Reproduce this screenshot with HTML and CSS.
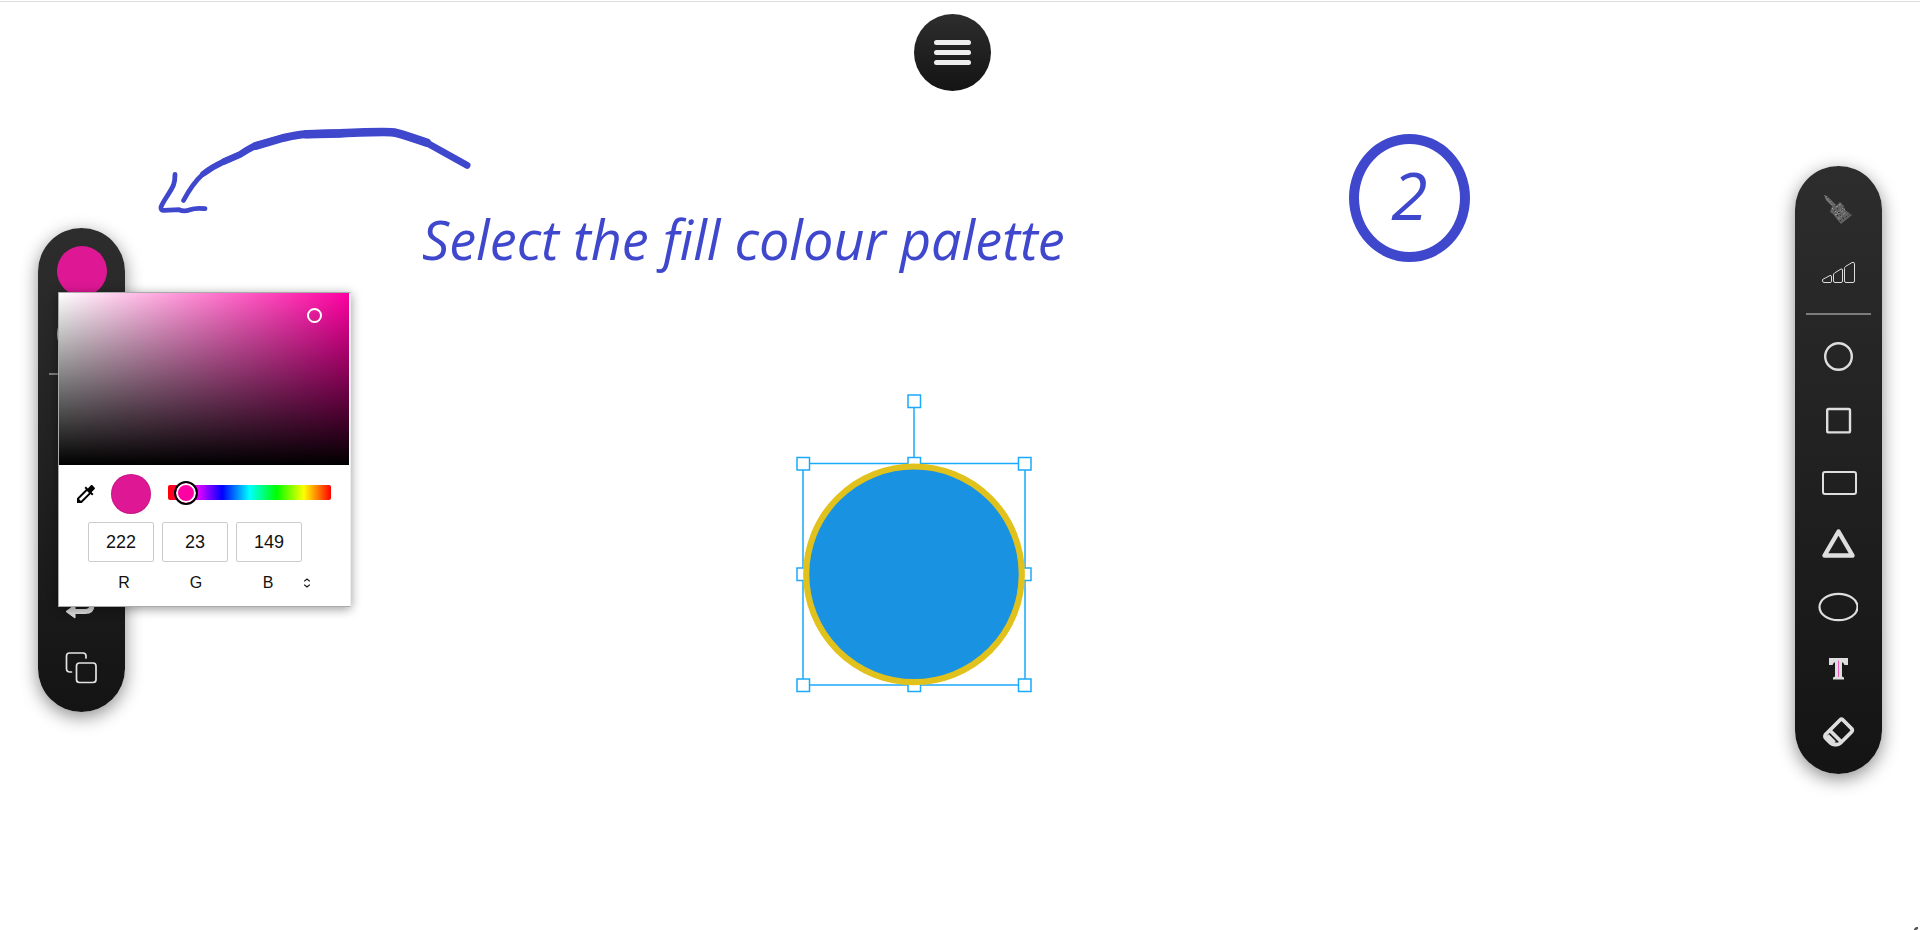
FILE: index.html
```html
<!DOCTYPE html>
<html lang="en">
<head>
<meta charset="utf-8">
<title>Sketch board</title>
<link rel="stylesheet" href="styles.css">
</head>
<body>
<main class="board">
  <section class="canvas" aria-label="Drawing canvas">
    <svg class="strokes" width="1100" height="720" viewBox="0 0 1100 720" aria-hidden="true">
      <g fill="none" stroke="#3f48cc" stroke-linecap="round" stroke-linejoin="round">
        <path stroke-width="4.8" d="M175 174.500Q175 181 173.500 185C170 193 163 201 161 207Q160.500 210.500 164 210.300L179 209.700Q184 212 190 209.800T205 208.700"/>
        <path stroke-width="4.8" d="M183.500 200.500C188 192 193 183 203 174Q212 167 224 161.500"/>
        <path stroke-width="5.800" d="M203 174Q212 167 224 161.500L240 154.500"/>
        <path stroke-width="6.800" d="M224 161.500L240 154.500Q250 148 256 145.500L283 137.800"/>
        <path stroke-width="8" d="M256 145.800L283 138Q300 134 306 134.200L340 133.300"/>
        <path stroke-width="8.600" d="M306 134.200L340 133.400Q390 131 396 132.800Q408 136 427 142.800"/>
        <path stroke-width="7" d="M396 132.800Q408 136 427 143L467 165.300"/>
      </g>
      <g fill="#fff" stroke="#1ba9fb" stroke-width="1.500">
        <path fill="none" d="M803 463.500H1025V685H803ZM914 401V463"/>
        <rect x="797" y="457.500" width="12.500" height="12.500"/>
        <rect x="908" y="457.500" width="12.500" height="12.500"/>
        <rect x="1018.500" y="457.500" width="12.500" height="12.500"/>
        <rect x="797" y="568" width="12.500" height="12.500"/>
        <rect x="1018.500" y="568" width="12.500" height="12.500"/>
        <rect x="797" y="679" width="12.500" height="12.500"/>
        <rect x="908" y="679" width="12.500" height="12.500"/>
        <rect x="1018.500" y="679" width="12.500" height="12.500"/>
        <rect x="908" y="395" width="12.500" height="12.500"/>
      </g>
      <circle cx="914" cy="574.300" r="107.800" fill="#1992e1" stroke="#e1c11b" stroke-width="6.200"/>
    </svg>
    <p class="note">Select the fill colour palette</p>
    <p class="step">2</p>
    <svg class="corner" width="6" height="4" viewBox="0 0 6 4" aria-hidden="true"><path d="M0 4V3L2 1H4V3L2 4Z" fill="#555"/></svg>
  </section>

  <button class="menu" type="button" aria-label="Menu"><span></span><span></span><span></span></button>

  <div class="bars">
    <div class="bar bar-left" role="toolbar" aria-label="Colours and history">
      <button class="tool" type="button" aria-label="Fill colour"><span class="dot fill"></span></button>
      <button class="tool" type="button" aria-label="Line colour"><span class="dot line"></span></button>
      <hr class="rule">
      <button class="tool" type="button" aria-label="Select"></button>
      <button class="tool" type="button" aria-label="Delete"></button>
      <button class="tool" type="button" aria-label="Redo"></button>
      <button class="tool" type="button" aria-label="Undo">
        <svg width="40" height="40" viewBox="0 0 40 40" fill="none" stroke="#dedede"><path stroke-width="5" d="M10 26.500H24Q31 26.500 31 20V13"/><path fill="#dedede" stroke-linejoin="round" d="M5 26.500L14 20V33Z"/></svg>
      </button>
      <button class="tool" type="button" aria-label="Duplicate">
        <svg width="40" height="40" viewBox="0 0 40 40" fill="none" stroke="#e4e4e4" stroke-width="1.700" stroke-linecap="round"><rect x="15.500" y="15" width="19.500" height="19.500" rx="3"/><path d="M10.500 24H9Q5.500 24 5.500 20.500V8Q5.500 5 8.500 5H22Q25 5 25 8V10"/></svg>
      </button>

      <div class="picker" role="dialog" aria-label="Colour picker">
        <div class="shade"><span class="shade-knob"></span></div>
        <div class="mix">
          <button class="dropper" type="button" aria-label="Pick from screen">
            <svg width="24" height="24" viewBox="0 0 24 24"><path d="M20.710 5.630l-2.340-2.340c-.390-.390-1.020-.390-1.410 0l-3.120 3.120-1.930-1.910-1.410 1.410 1.420 1.420L3 16.250V21h4.750l8.920-8.920 1.420 1.420 1.410-1.410-1.920-1.920 3.120-3.120c.400-.400.400-1.030.010-1.420zM6.920 19L5 17.080l8.060-8.060 1.920 1.920L6.920 19z"/></svg>
          </button>
          <span class="current"></span>
          <input class="hue" type="range" min="0" max="360" value="16" aria-label="Hue">
        </div>
        <div class="channels">
          <input id="r" class="value" type="text" value="222">
          <input id="g" class="value" type="text" value="23">
          <input id="b" class="value" type="text" value="149">
        </div>
        <div class="names">
          <label for="r">R</label><label for="g">G</label><label for="b">B</label>
          <button class="format" type="button" aria-label="Change colour format">
            <svg width="6" height="10" viewBox="0 0 6 10" fill="none" stroke="#111" stroke-width="1.200"><path d="M.5 3.500V3L3 1L5.500 3V3.500M.5 6.500V7L3 9L5.500 7V6.500"/></svg>
          </button>
        </div>
      </div>
    </div>

    <div class="bar" role="toolbar" aria-label="Drawing tools">
      <button class="tool" type="button" aria-label="Brush">
        <svg width="40" height="40" viewBox="0 0 40 40"><path fill="#777" d="M6 5L9 6L15 12L18 15L14 16L8 10Z"/><path fill="#626262" d="M15 14L18 16L22 12L26 16L27 20L34 25L23 34L18 28L15 24L12 22L13 19Z"/><path fill="none" stroke="#a4a4a4" stroke-dasharray="2 1.500" d="M14 18L19 23L25 18M18 17L23 14M17 25L22 23L27 19M20 29L28 22"/><path fill="none" stroke="#2c2c2c" stroke-dasharray="1.500 2" d="M9 7L16 15M16 21L21 18M19 26L26 17M22 31L32 24M20 22L25 28"/></svg>
      </button>
      <button class="tool" type="button" aria-label="Line width">
        <svg width="40" height="40" viewBox="0 0 40 40" fill="none" stroke="#ddd" stroke-linejoin="round"><path d="M4.500 26.500L12 22.500Q13.500 22 13.500 24V28.500Q13.500 29.500 12 29.500H6Q4 29.500 4.500 26.500ZM15.500 22Q15.500 20.500 16.500 20L23 16Q24.500 15.500 24.500 17V28Q24.500 29.500 23 29.500H17Q15.500 29.500 15.500 28ZM26.500 15.500Q26.500 14 27.500 13.500L34 9.500Q36.500 8.500 36.500 11V28Q36.500 29.500 35 29.500H28Q26.500 29.500 26.500 28Z"/></svg>
      </button>
      <hr class="rule">
      <button class="tool" type="button" aria-label="Circle">
        <svg width="40" height="40" viewBox="0 0 40 40" fill="none" stroke="#dedede" stroke-width="2.400"><circle cx="20.500" cy="20.500" r="13.300"/></svg>
      </button>
      <button class="tool" type="button" aria-label="Square">
        <svg width="40" height="40" viewBox="0 0 40 40" fill="none" stroke="#dedede" stroke-width="2.400"><rect x="9.200" y="10" width="22.800" height="23.400" rx="1.500"/></svg>
      </button>
      <button class="tool" type="button" aria-label="Rectangle">
        <svg width="40" height="40" viewBox="0 0 40 40" fill="none" stroke="#dedede" stroke-width="2"><rect x="5" y="10" width="33" height="22" rx="2"/></svg>
      </button>
      <button class="tool" type="button" aria-label="Triangle">
        <svg width="40" height="40" viewBox="0 0 40 40" fill="none" stroke="#dedede" stroke-width="4.400" stroke-linejoin="round"><path d="M20.500 6.500L34.500 30.500H6.500Z"/></svg>
      </button>
      <button class="tool" type="button" aria-label="Ellipse">
        <svg width="40" height="40" viewBox="0 0 40 40" fill="none" stroke="#dedede" stroke-width="2.200"><ellipse cx="20.500" cy="19" rx="19" ry="13.200"/></svg>
      </button>
      <button class="tool" type="button" aria-label="Text">
        <svg width="40" height="40" viewBox="0 0 40 40"><path fill="#dedede" d="M11 7H30V14H26.500L25 11.500H24V25.500L26 26.500V28.500H15V26.500L17 25.500V11.500H16L14.500 14H11Z"/><path stroke="#ee62bf" d="M20.500 9.500V26"/></svg>
      </button>
      <button class="tool" type="button" aria-label="Eraser">
        <svg width="40" height="40" viewBox="0 0 40 40" fill="none" stroke="#dedede" stroke-width="3.800" stroke-linejoin="round"><path d="M22 6Q23.500 4.500 25 6L33.500 14.500Q35 16.500 33.500 18L22.500 29Q21 30.500 19 30.500H16Q14 30.500 12.500 29L8 24.500Q6 22.500 8 20ZM12 16.500L23.500 28M9.500 21.500L16.500 28.500"/></svg>
      </button>
    </div>
  </div>
</main>
</body>
</html>
```

FILE: styles.css
```css
* { box-sizing: border-box; }

body {
  margin: 0;
  background: #fff;
  font-family: "Liberation Sans", Arial, sans-serif;
}

button {
  margin: 0;
  padding: 0;
  border: 0;
  background: none;
  cursor: pointer;
}

.board {
  position: relative;
  display: flex;
  min-height: 100vh;
  overflow: hidden;
}

.board::before {
  content: "";
  position: absolute;
  top: 1px;
  left: 0;
  right: 0;
  height: 1px;
  background: #dcdcdc;
}

.canvas { position: absolute; inset: 0; }
.strokes { position: absolute; top: 0; left: 0; }
.corner { position: absolute; right: 0; bottom: 0; }

.note,
.step {
  position: absolute;
  margin: 0;
  color: #3f48cc;
  font-family: "Open Sans", "Noto Sans", sans-serif;
  font-style: italic;
  white-space: nowrap;
}

.note {
  top: 204px;
  left: 422px;
  font-size: 54px;
  line-height: 70px;
}

.step {
  top: 134px;
  left: 1349px;
  display: grid;
  place-items: center;
  width: 121px;
  height: 128px;
  padding-bottom: 8px;
  border: 10px solid #3f48cc;
  border-radius: 50%;
  font-size: 66px;
  line-height: 66px;
}

.menu {
  position: absolute;
  top: 14px;
  left: calc(50% - 46px);
  display: flex;
  flex-direction: column;
  align-items: center;
  justify-content: center;
  gap: 5px;
  width: 77px;
  height: 77px;
  border-radius: 50%;
  background: linear-gradient(#2d2d2d, #141414);
}

.menu span {
  width: 37px;
  height: 5px;
  border-radius: 3px;
  background: #eee;
}

.bars {
  flex: 1;
  display: flex;
  align-items: center;
  justify-content: space-between;
  padding: 10px 38px 0;
}

.bar {
  position: relative;
  display: flex;
  flex-direction: column;
  align-items: center;
  width: 87px;
  padding: 13px 0 8px;
  border-radius: 44px;
  background: linear-gradient(#2d2d2d, #141414);
  box-shadow: 0 5px 18px rgba(0, 0, 0, 0.45);
}

.bar-left { padding: 11px 0 12px; }

.tool {
  display: grid;
  place-items: center;
  width: 63px;
  height: 63px;
}

.tool svg { margin: 0 1px 1px 0; }

.rule {
  width: 65px;
  height: 2px;
  margin: 8px 0 10px;
  border: 0;
  background: #7c7c7c;
}

.dot {
  width: 50px;
  height: 50px;
  border-radius: 50%;
}

.fill { background: #de1795; }
.line { background: #e1c11b; }

.picker {
  position: absolute;
  top: 64px;
  left: 20px;
  width: 293px;
  padding-bottom: 13px;
  border: 1px solid #aaa;
  border-right-color: #eee;
  background: #fff;
  box-shadow: 0 2px 10px rgba(0, 0, 0, 0.4);
}

.shade {
  position: relative;
  height: 172px;
  margin-right: 1px;
  background:
    linear-gradient(to bottom, transparent, #000),
    linear-gradient(to right, #fff, #ff00a2);
}

.shade-knob {
  position: absolute;
  top: 15px;
  left: 248px;
  width: 15px;
  height: 15px;
  border: 2px solid #fff;
  border-radius: 50%;
}

.mix {
  display: flex;
  align-items: center;
  padding: 9px 19px 8px 15px;
}

.dropper {
  display: flex;
  width: 24px;
  height: 24px;
}

.current {
  width: 40px;
  height: 40px;
  margin: 0 17px 0 13px;
  border-radius: 50%;
  background: #de1795;
  box-shadow: inset 0 0 0 1px rgba(0, 0, 0, 0.1);
}

.hue {
  flex: 1;
  min-width: 0;
  height: 15px;
  margin: 0 0 3px;
  appearance: none;
  border-radius: 2px;
  background: linear-gradient(to right, #f00, #f0f, #00f, #0ff, #0f0, #ff0, #f00);
}

.hue::-webkit-slider-thumb {
  appearance: none;
  width: 24px;
  height: 24px;
  border: 2px solid #000;
  border-radius: 50%;
  background: #ff00a2;
  box-shadow: inset 0 0 0 2px #fff;
}

.channels {
  display: flex;
  gap: 8px;
  padding-left: 29px;
}

.value {
  width: 66px;
  height: 40px;
  padding: 0;
  border: 1px solid #ccc;
  border-radius: 2px;
  background: #fff;
  color: #111;
  font: 18px "Liberation Sans", Arial, sans-serif;
  text-align: center;
}

.names {
  display: flex;
  align-items: center;
  padding: 11px 0 0 29px;
  color: #111;
  font-size: 16px;
  line-height: 20px;
}

.names label {
  width: 72px;
  text-align: center;
}

.format {
  display: flex;
}
```
